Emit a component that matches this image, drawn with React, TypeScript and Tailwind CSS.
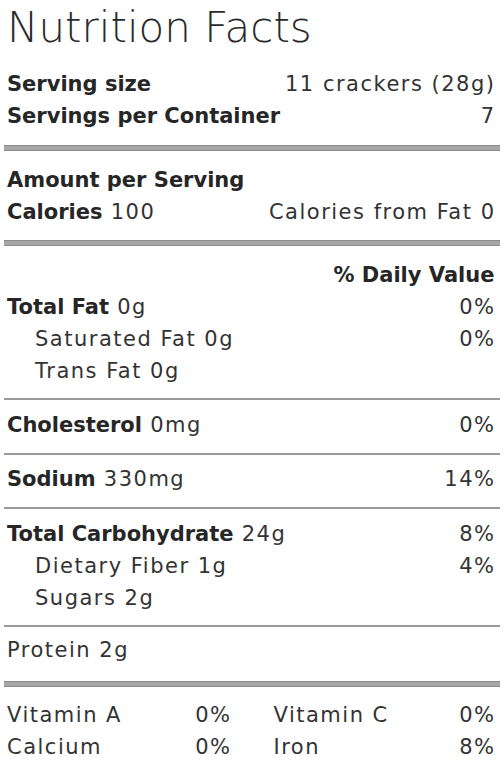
import React from "react";

const B = ({ children }: { children: React.ReactNode }) => (
  <span className="font-bold tracking-normal text-[#262626]">{children}</span>
);

const Row = ({
  children,
  right,
  indent = false,
  boldRight = false,
}: {
  children?: React.ReactNode;
  right?: React.ReactNode;
  indent?: boolean;
  boldRight?: boolean;
}) => (
  <div className="flex justify-between h-[32px] leading-[32px] px-[3px]">
    <div className={indent ? "pl-[28px]" : ""}>{children}</div>
    <div className={boldRight ? "mr-[2.5px]" : "mr-[1.5px]"}>{right}</div>
  </div>
);

export default function App() {
  return (
    <div
      className="w-[504px] h-[768px] bg-white px-[4px] text-[#333] text-[21px] tracking-[1.5px] overflow-hidden"
      style={{ fontFamily: "'DejaVu Sans', sans-serif" }}
    >
      <div className="px-[3px] pt-[4px] text-[42px] font-extralight tracking-normal leading-[48px] text-[#2a2a2a]">
        Nutrition Facts
      </div>

      <div className="mt-[16px]">
        <Row right="11 crackers (28g)">
          <B>Serving size</B>
        </Row>
        <Row right="7">
          <B>Servings per Container</B>
        </Row>
      </div>
      <div className="h-[6px] mt-[13px] bg-[#a6a6a6] border-y border-[#8c8c8c]" />

      <div className="mt-[13px]">
        <Row>
          <B>Amount per Serving</B>
        </Row>
        <Row right="Calories from Fat 0">
          <B>Calories</B> 100
        </Row>
      </div>
      <div className="h-[6px] mt-[12px] bg-[#a6a6a6] border-y border-[#8c8c8c]" />

      <div className="mt-[13px]">
        <Row right={<B>% Daily Value</B>} boldRight />
        <Row right="0%">
          <B>Total Fat</B> 0g
        </Row>
        <Row right="0%" indent>
          Saturated Fat 0g
        </Row>
        <Row indent>Trans Fat 0g</Row>
      </div>
      <div className="h-[2px] mt-[11px] bg-[#9a9a9a]" />

      <div className="mt-[9px]">
        <Row right="0%">
          <B>Cholesterol</B> 0mg
        </Row>
      </div>
      <div className="h-[2px] mt-[12px] bg-[#9a9a9a]" />

      <div className="mt-[8px]">
        <Row right="14%">
          <B>Sodium</B> 330mg
        </Row>
      </div>
      <div className="h-[2px] mt-[12px] bg-[#9a9a9a]" />

      <div className="mt-[9px]">
        <Row right="8%">
          <B>Total Carbohydrate</B> 24g
        </Row>
        <Row right="4%" indent>
          Dietary Fiber 1g
        </Row>
        <Row indent>Sugars 2g</Row>
      </div>
      <div className="h-[2px] mt-[11px] bg-[#9a9a9a]" />

      <div className="mt-[7px]">
        <Row>Protein 2g</Row>
      </div>
      <div className="h-[6px] mt-[15px] bg-[#a6a6a6] border-y border-[#8c8c8c]" />

      <div className="mt-[12px] px-[3px] grid grid-cols-2 gap-x-[43px]">
        <div className="flex justify-between h-[32px] leading-[32px]">
          <span>Vitamin A</span>
          <span className="mr-[-1px]">0%</span>
        </div>
        <div className="flex justify-between h-[32px] leading-[32px]">
          <span>Vitamin C</span>
          <span className="mr-[1.5px]">0%</span>
        </div>
        <div className="flex justify-between h-[32px] leading-[32px]">
          <span>Calcium</span>
          <span className="mr-[-1px]">0%</span>
        </div>
        <div className="flex justify-between h-[32px] leading-[32px]">
          <span>Iron</span>
          <span className="mr-[1.5px]">8%</span>
        </div>
      </div>
    </div>
  );
}
